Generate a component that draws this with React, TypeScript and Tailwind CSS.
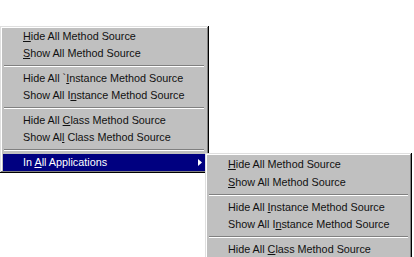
import React from "react";

type Item =
  | { kind: "sep" }
  | { kind: "item"; pre: string; u: string; post: string; h: number; active?: boolean; arrow?: boolean };

const it = (pre: string, u: string, post: string, h = 17, extra: Partial<Item> = {}): Item =>
  ({ kind: "item", pre, u, post, h, ...(extra as object) } as Item);

const mainItems: Item[] = [
  it("", "H", "ide All Method Source"),
  it("", "S", "how All Method Source"),
  { kind: "sep" },
  it("Hide All `", "I", "nstance Method Source"),
  it("Show All I", "n", "stance Method Source"),
  { kind: "sep" },
  it("Hide All ", "C", "lass Method Source"),
  it("Show Al", "l", " Class Method Source"),
  { kind: "sep" },
  it("In ", "A", "ll Applications", 17, { active: true, arrow: true }),
];

const subItems: Item[] = [
  it("", "H", "ide All Method Source", 18),
  it("", "S", "how All Method Source", 18),
  { kind: "sep" },
  it("Hide All ", "I", "nstance Method Source"),
  it("Show All I", "n", "stance Method Source"),
  { kind: "sep" },
  it("Hide All ", "C", "lass Method Source", 16),
];

function Menu({ items }: { items: Item[] }) {
  return (
    <div className="flex flex-col">
      {items.map((m, i) =>
        m.kind === "sep" ? (
          <div key={i} className="h-[8px] flex flex-col justify-center px-[1px]">
            <div className="h-[1px] bg-[#808080]" />
            <div className="h-[1px] bg-white" />
          </div>
        ) : (
          <div
            key={i}
            style={{ height: m.h }}
            className={
              "flex items-center justify-between pl-[20px] pr-[3px] whitespace-nowrap " +
              (m.active ? "bg-[#000080] text-white" : "text-[#111]")
            }
          >
            <span>
              {m.pre}
              <span className="underline underline-offset-[1px]">{m.u}</span>
              {m.post}
            </span>
            {m.arrow && (
              <svg width="4" height="7" viewBox="0 0 4 7" className="block">
                <path d="M0 0 L4 3.5 L0 7 Z" fill="#ffffff" />
              </svg>
            )}
          </div>
        )
      )}
    </div>
  );
}

export default function App() {
  return (
    <div
      className="relative w-[414px] h-[257px] bg-white overflow-hidden text-[10.8px] leading-none"
      style={{ fontFamily: '"Liberation Sans", Arial, sans-serif' }}
    >
      <div className="absolute left-0 top-[26px] w-[209px] bg-[#c0c0c0] pt-[2px] pb-[2px] pl-[3px] pr-[4px] shadow-[inset_-1px_-1px_0_#000,inset_1px_1px_0_#dfdfdf,inset_-2px_-2px_0_#808080,inset_2px_2px_0_#fff]">
        <Menu items={mainItems} />
      </div>
      <div className="absolute left-[205px] top-[153px] w-[207px] h-[120px] bg-[#c0c0c0] pt-[2px] pl-[3px] pr-[3px] shadow-[inset_-1px_-1px_0_#000,inset_1px_1px_0_#dfdfdf,inset_-2px_-2px_0_#808080,inset_2px_2px_0_#fff]">
        <Menu items={subItems} />
      </div>
    </div>
  );
}
